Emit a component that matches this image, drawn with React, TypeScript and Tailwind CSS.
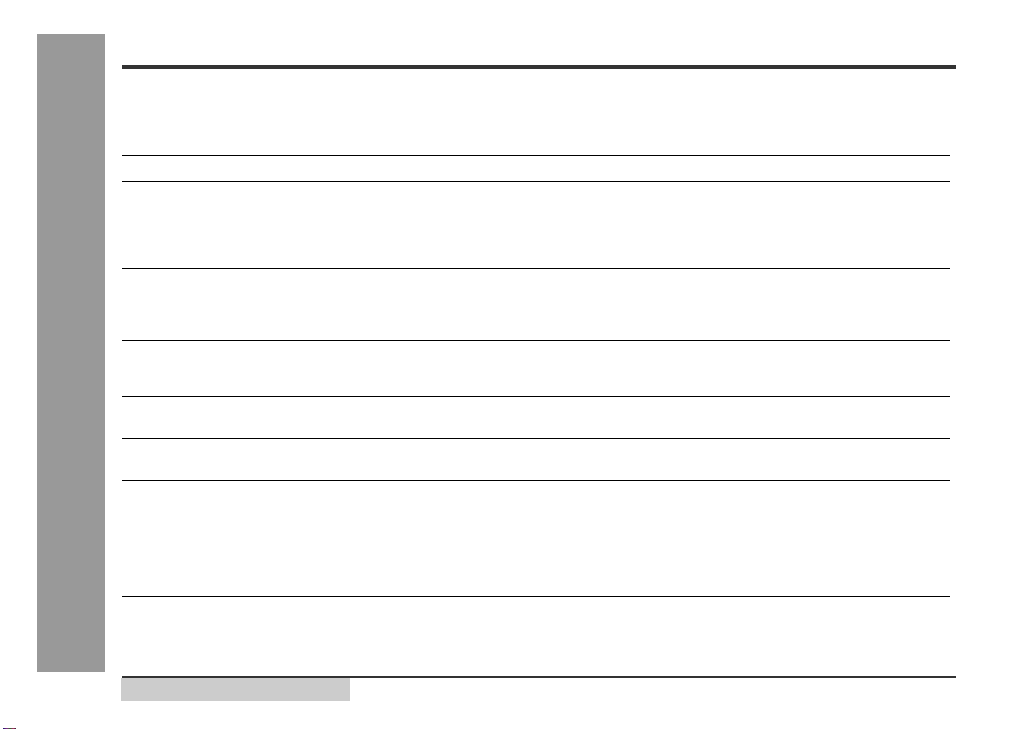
const rows = [26, 87, 72, 56, 42, 42, 116, 80]

export default function App() {
  return (
    <div className="flex h-[729px] w-[1025px] flex-col overflow-hidden bg-white font-['Liberation_Sans',sans-serif]">
      <div className="flex items-start pt-[34px]">
        <aside className="ml-[37px] h-[638px] w-[68px] bg-[#999999]" />

        <main className="ml-[16px] mt-[31px] w-[835px]">
          <div className="ml-[1px] h-[4px] bg-[#333333]" />

          <div className="ml-[1px] mt-[86px] w-[828px]">
            {rows.map((h, i) => (
              <div
                key={i}
                className="border-t border-black"
                style={{ height: h }}
              />
            ))}
          </div>

          <div className="ml-[1px] h-[2px] bg-[#333333]" />
          <div className="h-[23px] w-[229px] bg-[#cccccc]" />
        </main>
      </div>

      <div className="ml-[3px] mt-[27px] h-[1px] w-[13px] bg-[linear-gradient(90deg,#1a1a6e_0%,#8a2a8a_30%,#2a6a2a_55%,#b02a6a_80%,#2a2a2a_100%)]" />
    </div>
  )
}
